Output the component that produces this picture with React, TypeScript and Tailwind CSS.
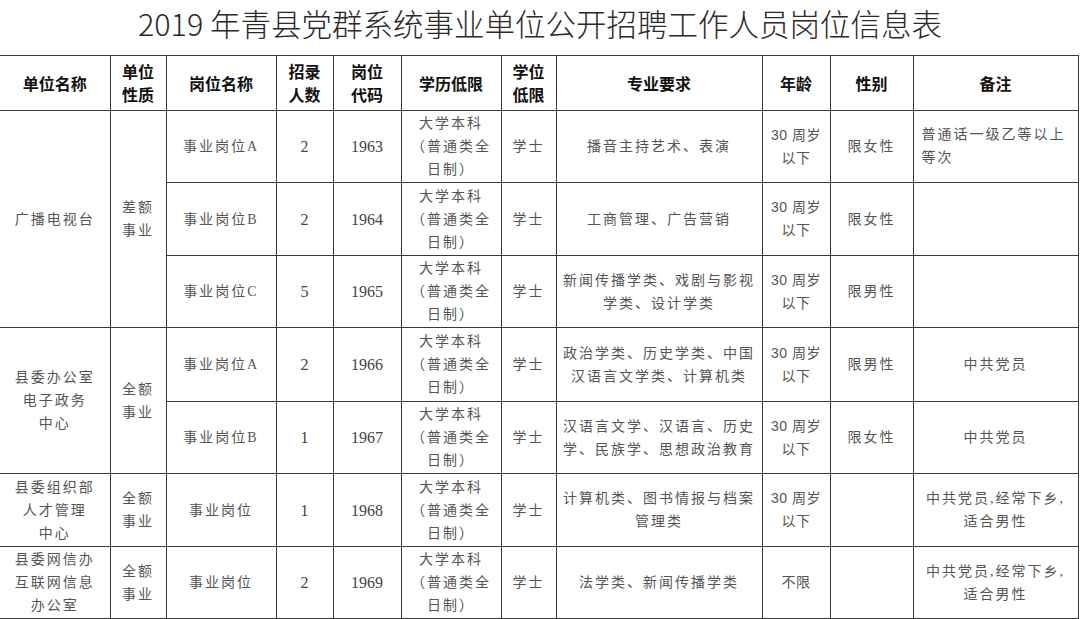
import React from "react";

type Cell = { lines: string[]; span?: number };
type Row = {
  unit?: Cell;
  nature?: Cell;
  pos: string;
  num: string;
  code: string;
  major: string[];
  age: string[];
  sex: string;
  note: string[];
  noteLeft?: boolean;
  h: string;
};

const edu = ["大学本科", "（普通类全", "日制）"];
const age30 = ["30 周岁", "以下"];

const rows: Row[] = [
  {
    unit: { lines: ["广播电视台"], span: 3 },
    nature: { lines: ["差额", "事业"], span: 3 },
    pos: "事业岗位A",
    num: "2",
    code: "1963",
    major: ["播音主持艺术、表演"],
    age: age30,
    sex: "限女性",
    note: ["普通话一级乙等以上", "等次"],
    noteLeft: true,
    h: "h-[72px]",
  },
  {
    pos: "事业岗位B",
    num: "2",
    code: "1964",
    major: ["工商管理、广告营销"],
    age: age30,
    sex: "限女性",
    note: [],
    h: "h-[73px]",
  },
  {
    pos: "事业岗位C",
    num: "5",
    code: "1965",
    major: ["新闻传播学类、戏剧与影视", "学类、设计学类"],
    age: age30,
    sex: "限男性",
    note: [],
    h: "h-[72px]",
  },
  {
    unit: { lines: ["县委办公室", "电子政务", "中心"], span: 2 },
    nature: { lines: ["全额", "事业"], span: 2 },
    pos: "事业岗位A",
    num: "2",
    code: "1966",
    major: ["政治学类、历史学类、中国", "汉语言文学类、计算机类"],
    age: age30,
    sex: "限男性",
    note: ["中共党员"],
    h: "h-[74px]",
  },
  {
    pos: "事业岗位B",
    num: "1",
    code: "1967",
    major: ["汉语言文学、汉语言、历史", "学、民族学、思想政治教育"],
    age: age30,
    sex: "限女性",
    note: ["中共党员"],
    h: "h-[72px]",
  },
  {
    unit: { lines: ["县委组织部", "人才管理", "中心"] },
    nature: { lines: ["全额", "事业"] },
    pos: "事业岗位",
    num: "1",
    code: "1968",
    major: ["计算机类、图书情报与档案", "管理类"],
    age: age30,
    sex: "",
    note: ["中共党员,经常下乡,", "适合男性"],
    h: "h-[73px]",
  },
  {
    unit: { lines: ["县委网信办", "互联网信息", "办公室"] },
    nature: { lines: ["全额", "事业"] },
    pos: "事业岗位",
    num: "2",
    code: "1969",
    major: ["法学类、新闻传播学类"],
    age: ["不限"],
    sex: "",
    note: ["中共党员,经常下乡,", "适合男性"],
    h: "h-[72px]",
  },
];

const bd = "border border-[#3a3a3a] p-0";
const body =
  "text-[14px] leading-[23px] tracking-[2px] text-[#555] font-['Liberation_Serif','Noto_Sans_CJK_SC',serif] text-center align-middle";
const num =
  "text-[16px] leading-[23px] text-[#444] font-['Liberation_Serif',serif] text-center align-middle";
const head =
  "text-[16px] leading-[23px] font-bold text-[#111] font-['Noto_Sans_CJK_SC',sans-serif] text-center align-middle";

function Lines({ lines }: { lines: string[] }) {
  return (
    <>
      {lines.map((l, i) => (
        <div key={i} className="whitespace-nowrap">
          {l}
        </div>
      ))}
    </>
  );
}

export default function App() {
  return (
    <div className="w-[1080px] h-[619px] bg-white overflow-hidden">
      <div className="h-[55px] flex items-center justify-center pb-[9px]">
        <h1 className="text-[30.5px] leading-none font-light text-[#2a2a2a] font-['Noto_Sans_CJK_SC',sans-serif]">
          2019 年青县党群系统事业单位公开招聘工作人员岗位信息表
        </h1>
      </div>
      <table className="w-[1078px] table-fixed border-collapse">
        <colgroup>
          <col className="w-[110px]" />
          <col className="w-[56px]" />
          <col className="w-[110px]" />
          <col className="w-[57px]" />
          <col className="w-[68px]" />
          <col className="w-[100px]" />
          <col className="w-[55px]" />
          <col className="w-[206px]" />
          <col className="w-[68px]" />
          <col className="w-[83px]" />
          <col className="w-[165px]" />
        </colgroup>
        <thead>
          <tr className="h-[55px]">
            <th className={`${bd} border-l-0 ${head}`}>单位名称</th>
            <th className={`${bd} ${head}`}>
              <Lines lines={["单位", "性质"]} />
            </th>
            <th className={`${bd} ${head}`}>岗位名称</th>
            <th className={`${bd} ${head}`}>
              <Lines lines={["招录", "人数"]} />
            </th>
            <th className={`${bd} ${head}`}>
              <Lines lines={["岗位", "代码"]} />
            </th>
            <th className={`${bd} ${head}`}>学历低限</th>
            <th className={`${bd} ${head}`}>
              <Lines lines={["学位", "低限"]} />
            </th>
            <th className={`${bd} ${head}`}>专业要求</th>
            <th className={`${bd} ${head}`}>年龄</th>
            <th className={`${bd} ${head}`}>性别</th>
            <th className={`${bd} ${head}`}>备注</th>
          </tr>
        </thead>
        <tbody>
          {rows.map((r, i) => (
            <tr key={i} className={r.h}>
              {r.unit && (
                <td rowSpan={r.unit.span} className={`${bd} border-l-0 ${body}`}>
                  <Lines lines={r.unit.lines} />
                </td>
              )}
              {r.nature && (
                <td rowSpan={r.nature.span} className={`${bd} ${body}`}>
                  <Lines lines={r.nature.lines} />
                </td>
              )}
              <td className={`${bd} ${body}`}>{r.pos}</td>
              <td className={`${bd} ${num}`}>{r.num}</td>
              <td className={`${bd} ${num}`}>{r.code}</td>
              <td className={`${bd} ${body} tracking-[1px]`}>
                <Lines lines={edu} />
              </td>
              <td className={`${bd} ${body}`}>学士</td>
              <td className={`${bd} ${body}`}>
                <Lines lines={r.major} />
              </td>
              <td className={`${bd} text-[14px] leading-[23px] tracking-[0.5px] text-[#555] font-['Liberation_Sans','Noto_Sans_CJK_SC',sans-serif] text-center align-middle`}>
                <Lines lines={r.age} />
              </td>
              <td className={`${bd} ${body}`}>{r.sex}</td>
              {r.noteLeft ? (
                <td className={`${bd} text-[14px] leading-[23px] tracking-[2px] text-[#555] font-['Liberation_Serif','Noto_Sans_CJK_SC',serif] text-left align-top pt-[12px] pl-[8px]`}>
                  <Lines lines={r.note} />
                </td>
              ) : (
                <td className={`${bd} ${body}`}>
                  <Lines lines={r.note} />
                </td>
              )}
            </tr>
          ))}
        </tbody>
      </table>
    </div>
  );
}
